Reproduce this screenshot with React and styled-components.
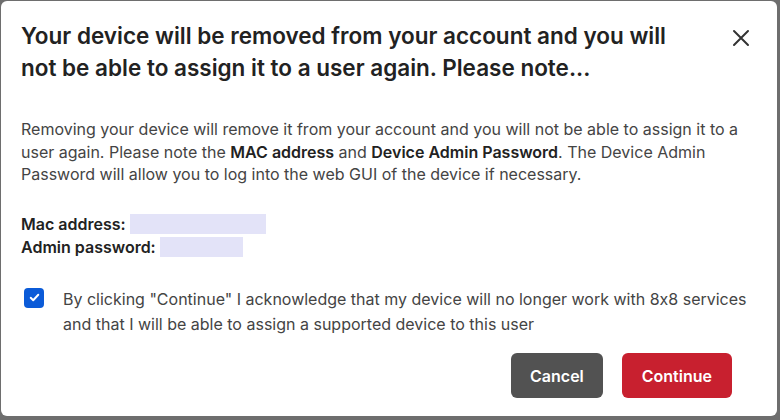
import React, { useState } from "react";
import styled, { createGlobalStyle } from "styled-components";

const GlobalStyle = createGlobalStyle`
  html, body {
    margin: 0;
    padding: 0;
    background: #6e6e6e;
  }
  body {
    font-family: Inter, "Noto Sans", sans-serif;
    font-feature-settings: "calt" 0;
    padding: 1px 3px 4px 1px;
    box-sizing: border-box;
    height: 420px;
    overflow: hidden;
  }
`;

const Dialog = styled.div`
  background: #fff;
  border-radius: 6px;
  height: 415px;
  box-sizing: border-box;
  padding: 19px 24px 18px 20px;
  display: flex;
  flex-direction: column;
  color: #333;
`;

const Header = styled.div`
  display: flex;
  justify-content: space-between;
  align-items: flex-start;
`;

const Title = styled.h2`
  margin: 0;
  font-size: 22.5px;
  line-height: 32px;
  font-weight: 600;
  color: #222;
  max-width: 668px;
`;

const Close = styled.button`
  border: none;
  background: none;
  padding: 0;
  margin: 6px 0 0 0;
  width: 24px;
  height: 24px;
  cursor: pointer;
  color: #333;
`;

const Paragraph = styled.p`
  margin: 34px 0 0 0;
  font-size: 16px;
  line-height: 22.5px;
  color: #444;
  b { color: #222; font-weight: 600; }
`;

const Fields = styled.div`
  margin-top: 27px;
  display: flex;
  flex-direction: column;
`;

const FieldRow = styled.div`
  display: flex;
  align-items: center;
  font-size: 16px;
  font-weight: 600;
  line-height: 23px;
  color: #222;
`;

const Redacted = styled.span`
  display: inline-block;
  width: ${(p) => p.$w}px;
  height: 20px;
  background: #e3e3f8;
  margin-left: 4px;
`;

const Ack = styled.label`
  margin-top: 28px;
  display: flex;
  align-items: flex-start;
  gap: 19px;
  font-size: 16px;
  line-height: 25px;
  color: #444;
  padding-left: 3px;
`;

const Box = styled.span`
  flex: none;
  width: 20px;
  height: 20px;
  border-radius: 4px;
  background: ${(p) => (p.$on ? "#0b5bd8" : "#fff")};
  border: ${(p) => (p.$on ? "none" : "1px solid #999")};
  display: flex;
  align-items: center;
  justify-content: center;
  margin-top: 1px;
  cursor: pointer;
`;

const Footer = styled.div`
  margin-top: auto;
  display: flex;
  justify-content: flex-end;
  gap: 19px;
  padding-right: 21px;
`;

const Button = styled.button`
  border: none;
  border-radius: 6px;
  height: 45px;
  padding: 0 ${(p) => p.$px}px;
  font-family: Inter, "Noto Sans", sans-serif;
  font-size: 16px;
  font-weight: 600;
  color: #fff;
  background: ${(p) => p.$bg};
  cursor: pointer;
`;

export default function App() {
  const [checked, setChecked] = useState(true);
  return (
    <>
      <GlobalStyle />
      <Dialog>
        <Header>
          <Title>
            Your device will be removed from your account and you will not be
            able to assign it to a user again. Please note...
          </Title>
          <Close aria-label="Close">
            <svg width="24" height="24" viewBox="0 0 24 24" fill="none" stroke="#333" strokeWidth="2" strokeLinecap="round">
              <path d="M5 5l14 14M19 5L5 19" />
            </svg>
          </Close>
        </Header>
        <Paragraph>
          Removing your device will remove it from your account and you will not
          be able to assign it to a user again. Please note the <b>MAC address</b>{" "}
          and <b>Device Admin Password</b>. The Device Admin Password will allow
          you to log into the web GUI of the device if necessary.
        </Paragraph>
        <Fields>
          <FieldRow>
            Mac address: <Redacted $w={136} />
          </FieldRow>
          <FieldRow>
            Admin password: <Redacted $w={83} />
          </FieldRow>
        </Fields>
        <Ack>
          <Box $on={checked} onClick={() => setChecked(!checked)}>
            {checked && (
              <svg width="13" height="13" viewBox="0 0 12 12" fill="none" stroke="#fff" strokeWidth="1.8" strokeLinecap="round" strokeLinejoin="round">
                <path d="M2.5 6.3l2.3 2.2 4.7-5" />
              </svg>
            )}
          </Box>
          <span>
            By clicking "Continue" I acknowledge that my device will no longer
            work with 8x8 services and that I will be able to assign a supported
            device to this user
          </span>
        </Ack>
        <Footer>
          <Button $bg="#525252" $px={19}>Cancel</Button>
          <Button $bg="#c8202f" $px={20}>Continue</Button>
        </Footer>
      </Dialog>
    </>
  );
}
